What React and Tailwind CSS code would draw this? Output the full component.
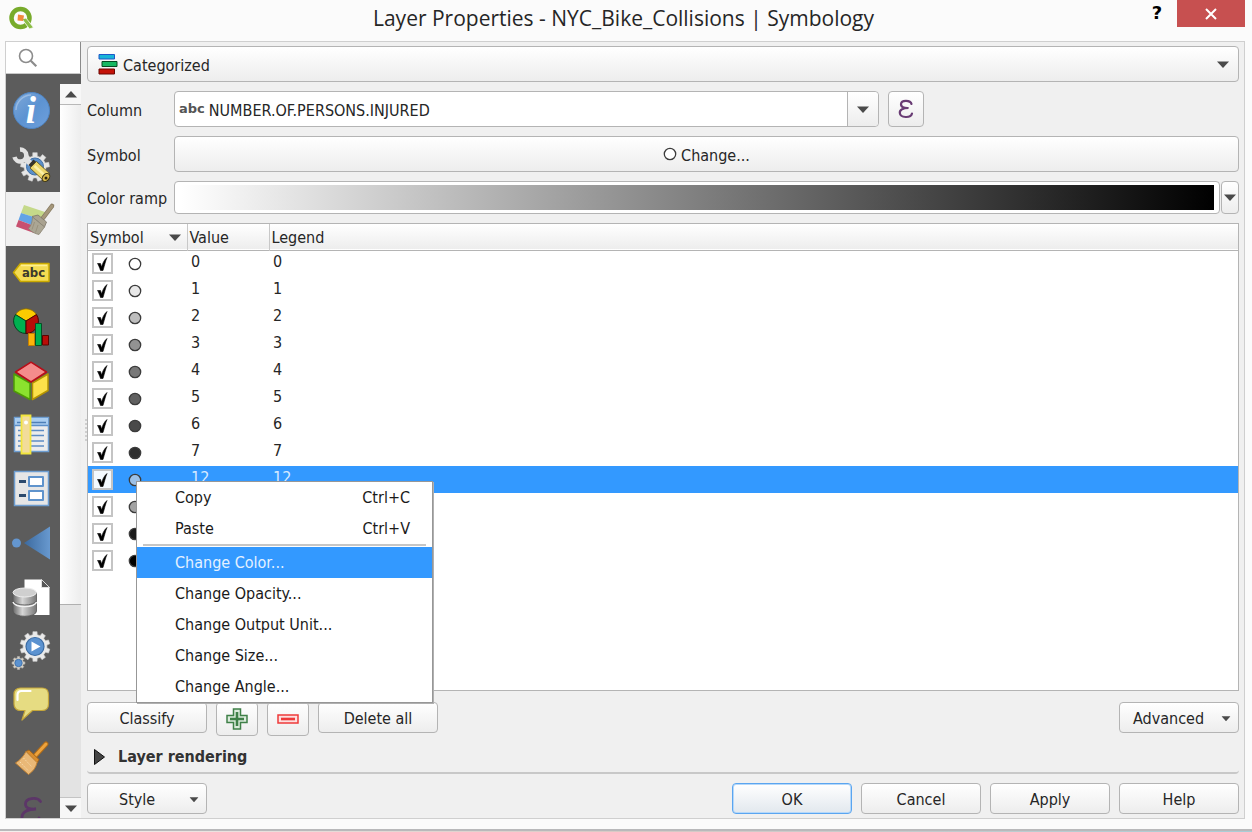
import React from "react";

const raised = "border border-[#b4b4b4] rounded bg-linear-to-b from-white to-[#ededed]";

function Caret({ className = "" }) {
  return (
    <svg viewBox="0 0 12 7" aria-hidden="true" className={"h-[7px] w-3 shrink-0 pointer-events-none " + className}>
      <path d="M0 0.5h12L6 7z" fill="#4a4a4a" />
    </svg>
  );
}

function gearPath(cx, cy, outer, inner, teeth) {
  const pts = [];
  const step = (Math.PI * 2) / teeth;
  for (let i = 0; i < teeth; i++) {
    const a = i * step - Math.PI / 2;
    [[-0.3, inner], [-0.22, outer], [0.22, outer], [0.3, inner]].forEach(([o, r]) => {
      pts.push(`${(cx + Math.cos(a + o * step) * r).toFixed(2)} ${(cy + Math.sin(a + o * step) * r).toFixed(2)}`);
    });
  }
  return "M" + pts.join("L") + "Z";
}

const icons = {
  Information: (
    <>
      <defs>
        <linearGradient id="info" x1="0" y1="0" x2="1" y2="1">
          <stop offset="0" stopColor="#7fa9d8" />
          <stop offset="0.5" stopColor="#5d93d2" />
          <stop offset="1" stopColor="#6fa0dc" />
        </linearGradient>
      </defs>
      <circle cx="20.5" cy="19.5" r="18" fill="url(#info)" stroke="#4f86c6" />
      <path d="M5 19a15.500 15.500 0 0 1 15-15" fill="none" stroke="#a9c6e8" strokeWidth="1.500" opacity=".7" />
      <text x="20" y="32" textAnchor="middle" fontSize="37" fontStyle="italic" fontWeight="700" fontFamily="Liberation Serif, serif" fill="#fff">i</text>
    </>
  ),
  Source: (
    <>
      <path d={gearPath(24, 22, 14.5, 11, 9)} fill="#e6e6e6" stroke="#cfcfcf" strokeWidth=".6" />
      <circle cx="24" cy="21.500" r="8.500" fill="#5b8fc9" stroke="#3f6fa5" />
      <path d="M9 4.500a6 6 0 1 1-5.500 7.500" fill="none" stroke="#e2e2e2" strokeWidth="4.500" />
      <path d="M14 13l6 6" stroke="#e2e2e2" strokeWidth="5.500" />
      <path d="M17.500 20l5-5.500 4 3.500-5 5.500z" fill="#35332c" />
      <path d="M19 23l6.500-6.500 13 12-6 7z" fill="#ecd66b" stroke="#5a4c12" strokeWidth=".8" />
      <path d="M23.500 21l12 11" stroke="#fbf0a6" strokeWidth="2.500" />
      <ellipse cx="35" cy="32.500" rx="3.200" ry="4.500" transform="rotate(40 35 32.500)" fill="#d8b84a" stroke="#3b3414" />
      <circle cx="35" cy="33" r="1.500" fill="#2c2612" />
    </>
  ),
  Symbology: (
    <g transform="translate(0 2)">
      <path d="M13 4l21 7-3 8-21-7z" fill="#c5d98a" />
      <path d="M10 12l19 6-3 8-18.500-7z" fill="#62a3e6" />
      <path d="M7.500 19L26 26l-3 6-18-6.500z" fill="#c8506f" />
      <path d="M41 5l-9 12" stroke="#83775f" strokeWidth="4.500" strokeLinecap="round" />
      <path d="M41 5l-9 12" stroke="#a5977a" strokeWidth="3" strokeLinecap="round" />
      <path d="M21 15.500l6-1.500 8.500 7-2 5z" fill="#a9a290" stroke="#7c7668" strokeWidth=".8" />
      <path d="M21.500 16l12 10-5.500 7.500c-4-.8-7.500-2.500-10.500-6 3-3 3.700-6.500 4-11.500z" fill="#aba694" stroke="#8a8472" strokeWidth=".8" />
      <path d="M23.500 21l-2.500 7.500M27 24l-2.500 7.500" stroke="#958d78" strokeWidth=".8" />
    </g>
  ),
  Labels: (
    <>
      <path d="M2.500 19.500L9.500 10.500H38v18H9.500z" fill="#f4dc52" stroke="#c9a900" strokeWidth="1.500" strokeLinejoin="round" />
      <path d="M10 12.500h26" stroke="#fff08f" strokeWidth="1.500" />
      <text x="22.500" y="24" textAnchor="middle" fontSize="13" fontWeight="700" fontFamily="DejaVu Sans Condensed, DejaVu Sans, sans-serif" fill="#3c3a2c">abc</text>
    </>
  ),
  Diagrams: (
    <>
      <path d="M15 14L4.500 7.500A12.500 12.500 0 0 1 25.500 7.500z" fill="#fccb00" stroke="#8d6b00" strokeWidth=".8" />
      <path d="M15 14L4.500 7.500A12.500 12.500 0 0 0 15 26.500z" fill="#00b050" stroke="#063f20" />
      <path d="M15 14L25.500 7.500A12.500 12.500 0 0 1 15 26.500z" fill="#b80d08" stroke="#4d0300" />
      <path d="M17.500 26.500h6v12h-6z" fill="#fbb40a" stroke="#c67f00" />
      <path d="M24.500 16.500h6v22h-6z" fill="#00b050" stroke="#064f26" />
      <path d="M31.500 28.500h6v9.500h-6z" fill="#b80d08" stroke="#5b0400" />
    </>
  ),
  "3D View": (
    <>
      <path d="M3 13l16 9v16.500L3 30z" fill="#8be22e" stroke="#4e9a06" strokeWidth="1.500" strokeLinejoin="round" />
      <path d="M21.500 22L37 13v16.500l-15.500 9z" fill="#fce14a" stroke="#b59400" strokeWidth="1.500" strokeLinejoin="round" />
      <path d="M20 1.200L35.500 11 20 21 4.500 11z" fill="#f48c8c" stroke="#b80d18" strokeWidth="1.500" strokeLinejoin="round" />
    </>
  ),
  "Source Fields": (
    <>
      <path d="M3.500 2.500h34v34h-34z" fill="#ececec" stroke="#6d9dd0" strokeWidth="1.500" />
      <path d="M4 3h33v7H4z" fill="#a9cdf0" />
      <path d="M6 7.500h29" stroke="#4d7fb8" strokeWidth="1.500" />
      <path d="M4 10.500h33" stroke="#5b8fc9" strokeWidth="1.500" />
      <path d="M7 15.500h26M7 20.500h26M7 26h26M7 31h26" stroke="#5d8cc4" strokeWidth="1.500" />
      <path d="M10.500.5h9v38h-9z" fill="#f2dc9a" stroke="#f2e53c" strokeWidth="1.800" />
      <circle cx="15" cy="7.500" r="2" fill="#fff" />
    </>
  ),
  "Attributes Form": (
    <>
      <path d="M3.500 2.500h34v34h-34z" fill="#e6e6e6" stroke="#6d9dd0" strokeWidth="1.500" />
      <path d="M18 8h14v9H18zM18 22h14v9H18z" fill="#fff" stroke="#5f93cc" strokeWidth="2" strokeLinejoin="round" />
      <path d="M8 12.500h7M8 26.500h7" stroke="#2c4a6d" strokeWidth="3" />
    </>
  ),
  Joins: (
    <>
      <defs>
        <linearGradient id="joins" x1="0" x2="1">
          <stop offset="0" stopColor="#3c6a9f" />
          <stop offset="1" stopColor="#6899cf" />
        </linearGradient>
      </defs>
      <circle cx="5.500" cy="20" r="4.500" fill="#6496cf" />
      <path d="M13 20L39 3.500v33z" fill="url(#joins)" />
    </>
  ),
  "Auxiliary Storage": (
    <>
      <defs>
        <linearGradient id="drum" x1="0" x2="1">
          <stop offset="0" stopColor="#6a6a6a" />
          <stop offset=".4" stopColor="#d6d6d6" />
          <stop offset="1" stopColor="#777" />
        </linearGradient>
      </defs>
      <path d="M13.500 2.500h17l8 8v27.500h-25z" fill="#fff" />
      <path d="M30.500 2.500v8h8z" fill="#555" stroke="#eee" strokeWidth=".8" />
      <path d="M2 15.500v18.500c0 7 23.500 7 23.500 0V15.500z" fill="url(#drum)" stroke="#555" strokeWidth=".8" />
      <path d="M2 25c2 6 21.500 6 23.500 0" fill="none" stroke="#f2f2f2" strokeWidth="1.500" />
      <path d="M2 23.500c2 6 21.500 6 23.500 0" fill="none" stroke="#666" />
      <ellipse cx="13.700" cy="15.500" rx="11.700" ry="4.500" fill="#cfcfcf" stroke="#eee" />
    </>
  ),
  Actions: (
    <>
      <path d={gearPath(24, 15.5, 15, 12, 10)} fill="#eaeaea" stroke="#cfcfcf" strokeWidth=".6" />
      <circle cx="24" cy="15.500" r="9" fill="#5b92d0" stroke="#3a6ba4" strokeWidth="1.200" />
      <path d="M20.500 10.500v10l9-5z" fill="#fff" />
      <path d={gearPath(7.5, 32, 6.5, 5, 8)} fill="#d9d2c4" stroke="#b5b5b5" strokeWidth=".6" />
      <circle cx="7.500" cy="32" r="3.700" fill="#5b92d0" stroke="#3a6ba4" strokeWidth=".8" />
    </>
  ),
  Display: (
    <>
      <path d="M9.500 3h21.500c4 0 6.500 2.500 6.500 6.500V19c0 4-2.500 6.500-6.500 6.500h-9.500L11 35l3-9.500H9.500C5.500 25.500 3 23 3 19V9.500C3 5.500 5.500 3 9.500 3z" fill="#e6dc82" stroke="#c4a63a" strokeWidth="1.200" strokeLinejoin="round" />
      <path d="M6.500 15V10c0-2.500 1.500-4 4-4h9" fill="none" stroke="#fff" strokeWidth="2.200" strokeLinecap="round" />
    </>
  ),
  Rendering: (
    <>
      <path d="M35 5L23.500 17.500" stroke="#b06c18" strokeWidth="5" strokeLinecap="round" />
      <path d="M35 5L23.500 17.500" stroke="#eda33d" strokeWidth="3" strokeLinecap="round" />
      <path d="M15 12.500l3-1.500 10 9.500-2 3.500z" fill="#d98e2e" stroke="#a7661a" />
      <path d="M15 12.500l11 11c-1 5-4 9-8.500 12L4.500 24c4.500-3 8-6.500 10.500-11.500z" fill="#e9b877" stroke="#c48434" />
      <path d="M9 23l8.500 9M12.500 19l8.500 9" stroke="#f6dcae" strokeDasharray="1.500 1.500" />
    </>
  ),
  Variables: (
    <path d="M29.500 8.500C26 3.500 14 5 14.500 11.500c.2 3.500 4 5 10.500 4.500-8 0-14.500 3-14 9s14 6.500 17 0" fill="none" stroke="#5c3668" strokeWidth="2.800" strokeLinecap="round" />
  ),
};

const classes = [
  ["0", "#ffffff"],
  ["1", "#e8e8e8"],
  ["2", "#bdbdbd"],
  ["3", "#929292"],
  ["4", "#787878"],
  ["5", "#606060"],
  ["6", "#494949"],
  ["7", "#303030"],
  ["12", "#9cc0e6"],
  ["", "#a3a3a3"],
  ["", "#1a1a1a"],
  ["", "#000000"],
];

function Marker({ fill, className = "" }) {
  return (
    <svg viewBox="0 0 14 14" aria-hidden="true" className={"size-3.5 shrink-0 " + className}>
      <circle cx="7" cy="7" r="5.700" fill={fill} stroke="#3c3c3c" strokeWidth="1.300" />
    </svg>
  );
}

function Tick({ label }) {
  return (
    <span className="grid size-[21px] shrink-0">
      <input
        type="checkbox"
        defaultChecked
        aria-label={label}
        className="peer appearance-none size-[21px] border-2 border-[#c4c4c4] bg-white/95 [grid-area:1/1]"
      />
      <svg viewBox="0 0 21 21" aria-hidden="true" className="size-[21px] pointer-events-none invisible peer-checked:visible [grid-area:1/1]">
        <path d="M5.500 10.500l3 0 1 3.500c1-3.500 2.500-7 5.500-9.500-1.500 3.500-2.500 8-4 13H8.500C7.500 14.500 6.500 12 5.500 10.500z" fill="#000" stroke="#000" strokeWidth=".6" strokeLinejoin="round" />
      </svg>
    </span>
  );
}

function MenuItem({ children, shortcut, active }) {
  return (
    <button
      type="button"
      role="menuitem"
      className={
        "flex h-[31px] w-full items-center justify-between pl-[38px] pr-[22px] pt-0.5 text-left " +
        (active ? "bg-[#3399ff] text-[#e4f1ff]" : "")
      }
    >
      <span>{children}</span>
      {shortcut && <span>{shortcut}</span>}
    </button>
  );
}

function ContextMenu() {
  return (
    <div role="menu" className="absolute left-1/2 top-1/2 z-10 mt-px ml-px w-[297px] border border-[#979797] bg-white text-[#1a1a1a] shadow-[1px_1px_0_#b0b0b0]">
      <MenuItem shortcut="Ctrl+C">Copy</MenuItem>
      <MenuItem shortcut="Ctrl+V">Paste</MenuItem>
      <div role="separator" className="mx-1.5 mb-px h-0.5 bg-[#c6c6c6]" />
      <MenuItem active>Change Color...</MenuItem>
      <MenuItem>Change Opacity...</MenuItem>
      <MenuItem>Change Output Unit...</MenuItem>
      <MenuItem>Change Size...</MenuItem>
      <MenuItem>Change Angle...</MenuItem>
    </div>
  );
}

function Sidebar() {
  return (
    <aside className="flex w-[75px] shrink-0 flex-col bg-[#5c5c5c]">
      <label className="mb-2.5 flex h-8 items-center border-r border-b border-r-[#8a8a8a] border-b-[#c8c8c8] bg-white pl-3">
        <svg viewBox="0 0 20 20" aria-hidden="true" className="size-5 shrink-0">
          <circle cx="8" cy="8" r="6.500" fill="none" stroke="#8c8c8c" strokeWidth="1.600" />
          <path d="M12.800 12.800l5.500 5.500" stroke="#8c8c8c" strokeWidth="2.200" />
        </svg>
        <input type="search" aria-label="Search" className="h-full w-full min-w-0 bg-transparent outline-none" />
      </label>
      <div className="flex min-h-0 flex-1">
        <nav aria-label="Sections" className="flex-1 overflow-hidden">
          {Object.entries(icons).map(([name, art]) => (
            <button
              key={name}
              type="button"
              aria-label={name}
              className={"flex h-[54px] w-full items-center pl-[5px] " + (name === "Symbology" ? "bg-[#f0f0f0]" : "")}
            >
              <svg viewBox="0 0 40 40" aria-hidden="true" className="size-10 overflow-visible">{art}</svg>
            </button>
          ))}
        </nav>
        <div className="flex w-[21px] flex-col bg-[#e3e3e3]">
          <button type="button" aria-label="Scroll up" className="grid h-[21px] place-items-center border-b border-[#b8b8b8] bg-[#f7f7f7]">
            <Caret className="rotate-180" />
          </button>
          <div className="basis-[500px] shrink border-b border-[#b0b0b0] bg-linear-to-r from-white to-[#ededed]" />
          <div className="flex-1" />
          <button type="button" aria-label="Scroll down" className="grid h-[21px] place-items-center border-t border-[#c4c4c4] bg-[#f7f7f7]">
            <Caret />
          </button>
        </div>
      </div>
    </aside>
  );
}

function PushButton({ children, className = "" }) {
  return (
    <button type="button" className={"h-[31px] w-[120px] pt-0.5 " + raised + " " + className}>
      {children}
    </button>
  );
}

export default function App() {
  return (
    <div className="flex h-screen flex-col overflow-hidden bg-[#fbfbfb] font-['DejaVu_Sans_Condensed','DejaVu_Sans',sans-serif] text-[16px] leading-5 text-[#262626]">
      <header className="flex h-[41px] shrink-0 items-start pl-2 pr-[7px]">
        <svg viewBox="0 0 26 26" aria-hidden="true" className="mt-1.5 size-[26px]">
          <circle cx="12.500" cy="12" r="9" fill="none" stroke="#78ab2b" strokeWidth="4.500" />
          <path d="M14 13l4-1 7.500 9.500-4 1.500z" fill="#8bbd45" stroke="#fbfbfb" strokeWidth=".8" />
          <path d="M10 8.500l6 1-1 5.500-5.500-.5z" fill="#f08a3c" />
        </svg>
        <h1 className="flex-1 pl-[76px] pt-1 text-center font-['Open_Sans','Noto_Sans',sans-serif] text-[21px] leading-7">
          Layer Properties - NYC_Bike_Collisions | Symbology
        </h1>
        <button type="button" aria-label="What's this?" className="h-[25px] w-10 font-['DejaVu_Sans',sans-serif] text-[18px] font-bold text-black">?</button>
        <button type="button" aria-label="Close" className="grid h-[27px] w-[68px] place-items-center bg-[#c75050]">
          <svg viewBox="0 0 12 12" aria-hidden="true" className="size-3">
            <path d="M1 1l10 10M11 1L1 11" stroke="#fff" strokeWidth="2" />
          </svg>
        </button>
      </header>

      <div className="ml-[5px] mr-[7px] flex min-h-0 flex-1 border border-[#cfcfcf] bg-[#f0f0f0]">
        <Sidebar />
        <div aria-hidden="true" className="flex w-1.5 flex-col items-end justify-center gap-0.5">
          {[0, 1, 2, 3, 4, 5].map((n) => (
            <span key={n} className="size-0.5 rounded-full bg-[#c4c4c4]" />
          ))}
        </div>

        <main className="flex min-w-0 flex-1 flex-col pt-1 pr-[5px] pb-1">
          <div className="mb-[9px] grid items-center">
            <select aria-label="Renderer" className={"h-9 w-full appearance-none pt-[3px] pl-[35px] [grid-area:1/1] " + raised}>
              <option>Categorized</option>
            </select>
            <svg viewBox="0 0 20 22" aria-hidden="true" className="pointer-events-none ml-[11px] h-[22px] w-5 [grid-area:1/1]">
              <path d="M1 1.500h15.500v4.500H1z" fill="#18b4d8" stroke="#1f57c8" />
              <path d="M4 8.500h15v5H4z" fill="#17b862" stroke="#064a22" />
              <path d="M1 16h15.500v5H1z" fill="#c41208" stroke="#6b0702" />
            </svg>
            <Caret className="mr-2.5 justify-self-end [grid-area:1/1]" />
          </div>

          <div className="mb-[9px] flex items-center">
            <label htmlFor="column" className="w-[87px] pt-[3px]">Column</label>
            <div className="flex h-9 w-[705px] items-center rounded border border-[#b4b4b4] bg-white">
              <span aria-hidden="true" className="pl-1 pr-1 font-['DejaVu_Sans',sans-serif] text-[13px] font-bold text-[#555]">abc</span>
              <input id="column" defaultValue="NUMBER.OF.PERSONS.INJURED" className="h-full min-w-0 flex-1 bg-transparent pt-[3px] outline-none" />
              <button type="button" aria-label="Show columns" className="grid h-full w-[31px] place-items-center rounded-r border-l border-[#b4b4b4] bg-linear-to-b from-white to-[#ededed]">
                <Caret />
              </button>
            </div>
            <button type="button" aria-label="Expression" className={"ml-[9px] grid size-9 place-items-center " + raised}>
              <svg viewBox="0 0 16 20" aria-hidden="true" className="h-5 w-4">
                <path d="M13.500 5C12.500 1 3.500.5 3 5c-.2 3 3 4.200 7.500 4C5 9 1.500 10.500 1.800 14c.5 5 11 5.500 12.200.5" fill="none" stroke="#693c74" strokeWidth="2.200" strokeLinecap="round" />
              </svg>
            </button>
          </div>

          <div className="mb-[9px] flex items-center">
            <span id="symbol-label" className="w-[87px] pt-[3px]">Symbol</span>
            <button type="button" aria-describedby="symbol-label" className={"flex h-9 flex-1 items-center justify-center gap-1 " + raised}>
              <Marker fill="#fff" />
              <span className="pt-[3px]">Change...</span>
            </button>
          </div>

          <div className="mb-[9px] flex items-center">
            <span id="ramp-label" className="w-[87px] pt-[3px]">Color ramp</span>
            <button type="button" aria-labelledby="ramp-label" className="h-[33px] min-w-0 flex-1 rounded border border-[#b4b4b4] bg-white py-[3px] pl-1.5 pr-[5px]">
              <span className="block h-full bg-linear-to-r/srgb from-white to-black" />
            </button>
            <button type="button" aria-label="Color ramp options" className={"ml-px grid h-[33px] w-[18px] place-items-center " + raised}>
              <Caret />
            </button>
          </div>

          <div className="min-h-0 flex-1 border border-[#b4b4b4] bg-white">
            <table className="w-full table-fixed border-collapse text-left">
              <colgroup>
                <col className="w-[99px]" />
                <col className="w-[82px]" />
                <col />
              </colgroup>
              <thead>
                <tr className="h-[26px] border-b border-[#b4b4b4] bg-linear-to-b from-white to-[#ededed]">
                  <th className="border-r border-[#c8c8c8] p-0 pt-0.5 pl-0.5 font-normal">
                    <span className="flex items-center justify-between pr-1.5">Symbol<Caret /></span>
                  </th>
                  <th className="border-r border-[#c8c8c8] p-0 pt-0.5 pl-0.5 font-normal">Value</th>
                  <th className="p-0 pt-0.5 pl-0.5 font-normal">Legend</th>
                </tr>
              </thead>
              <tbody>
                {classes.map(([value, fill], i) => (
                  <tr key={i} className={"h-[27px] " + (value === "12" ? "bg-[#3399ff] text-[#d6eaff]" : "")}>
                    <td className="p-0 pl-1">
                      <span className="flex items-center gap-[15px]">
                        <Tick label={"Show class " + (value || i + 1)} />
                        <span className="relative flex">
                          <Marker fill={fill} />
                          {value === "12" && <ContextMenu />}
                        </span>
                      </span>
                    </td>
                    <td className="p-0 pb-1 pl-1">{value}</td>
                    <td className="p-0 pb-1 pl-1">{value}</td>
                  </tr>
                ))}
              </tbody>
            </table>
          </div>

          <div className="mt-[11px] flex items-start gap-[9px]">
            <PushButton>Classify</PushButton>
            <button type="button" aria-label="Add" className={"grid h-[34px] w-[42px] place-items-center " + raised}>
              <svg viewBox="0 0 22 22" aria-hidden="true" className="size-[22px]">
                <path d="M7.500 1h7v6.500H21v7h-6.500V21h-7v-6.500H1v-7h6.500z" fill="#dcebdc" stroke="#3f8048" strokeWidth="1.500" />
                <path d="M11 4v14M4 11h14" stroke="#3f8048" strokeWidth="2.600" />
              </svg>
            </button>
            <button type="button" aria-label="Remove" className={"grid h-[34px] w-[42px] place-items-center " + raised}>
              <svg viewBox="0 0 22 10" aria-hidden="true" className="h-2.5 w-[22px]">
                <path d="M1 1h20v8H1z" fill="#fde0e0" stroke="#ee3a3a" strokeWidth="1.500" />
                <path d="M4 5h14" stroke="#ee3a3a" strokeWidth="2.600" />
              </svg>
            </button>
            <PushButton>Delete all</PushButton>
            <PushButton className="ml-auto flex items-center justify-between pl-[13px] pr-1.5">
              Advanced
              <Caret className="scale-75" />
            </PushButton>
          </div>

          <button type="button" aria-expanded="false" className="mt-1.5 mb-[9px] flex h-8 items-center gap-[13px] rounded-b-sm border-b-2 border-[#c8c8c8] pl-[7px] text-left font-bold text-[#333]">
            <svg viewBox="0 0 11 16" aria-hidden="true" className="h-4 w-[11px]">
              <path d="M.5.5L10.500 8 .5 15.500z" fill="#444" stroke="#111" />
            </svg>
            Layer rendering
          </button>

          <div className="flex gap-[9px]">
            <PushButton className="mr-auto flex items-center justify-between pl-[31px] pr-1.5">
              Style
              <Caret className="scale-75" />
            </PushButton>
            <button type="button" className="h-[31px] w-[120px] rounded border border-[#5aa5f0] bg-linear-to-b from-white to-[#e2e8ee] pt-0.5 shadow-[inset_0_0_0_1px_#b5d8fa]">OK</button>
            <PushButton>Cancel</PushButton>
            <PushButton>Apply</PushButton>
            <PushButton>Help</PushButton>
          </div>
        </main>
      </div>

      <footer aria-hidden="true" className="flex h-[13px] shrink-0 flex-col justify-end">
        <div className="h-0.5 bg-[#b9b9bb]" />
        <div className="h-px bg-linear-to-r from-[#f4f0ee] via-[#d9c9c4] to-[#a9cdd6]" />
      </footer>
    </div>
  );
}
